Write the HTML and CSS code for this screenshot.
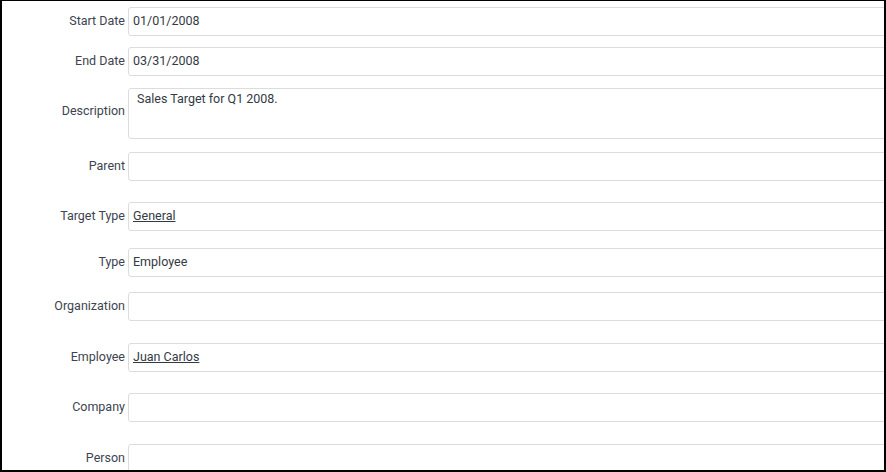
FILE: index.html
```html
<!DOCTYPE html>
<html>
<head>
<meta charset="utf-8">
<link rel="stylesheet" href="styles.css">
</head>
<body>
<div class="frame">
  <div class="form">
    <div class="row r-start">
      <label class="lbl">Start Date</label>
      <div class="field">01/01/2008</div>
    </div>
    <div class="row r-end">
      <label class="lbl">End Date</label>
      <div class="field">03/31/2008</div>
    </div>
    <div class="row r-desc">
      <label class="lbl">Description</label>
      <div class="field area">Sales Target for Q1 2008.</div>
    </div>
    <div class="row r-parent">
      <label class="lbl">Parent</label>
      <div class="field"></div>
    </div>
    <div class="row r-ttype">
      <label class="lbl">Target Type</label>
      <div class="field"><a class="link" href="#">General</a></div>
    </div>
    <div class="row r-type">
      <label class="lbl">Type</label>
      <div class="field">Employee</div>
    </div>
    <div class="row r-org">
      <label class="lbl">Organization</label>
      <div class="field"></div>
    </div>
    <div class="row r-emp">
      <label class="lbl">Employee</label>
      <div class="field"><a class="link" href="#">Juan Carlos</a></div>
    </div>
    <div class="row r-comp">
      <label class="lbl">Company</label>
      <div class="field"></div>
    </div>
    <div class="row r-person">
      <label class="lbl">Person</label>
      <div class="field"></div>
    </div>
  </div>
</div>
</body>
</html>
```

FILE: styles.css
```css
html, body {
  margin: 0;
  padding: 0;
  background: #fff;
}
.frame {
  box-sizing: border-box;
  width: 886px;
  height: 472px;
  border-style: solid;
  border-color: #000;
  border-width: 1px 2px 2px 2px;
  overflow: hidden;
  font-family: Roboto, "Liberation Sans", sans-serif;
  font-size: 12.5px;
}
.form {
  display: flex;
  flex-direction: column;
}
.row {
  display: flex;
  align-items: center;
}
.lbl {
  width: 126px;
  flex: none;
  text-align: right;
  color: #3d4450;
  padding-right: 3px;
  padding-bottom: 2px;
  box-sizing: border-box;
  font-size: 12.5px;
}
.row.r-desc .lbl {
  margin-top: -5px;
}
.field {
  box-sizing: border-box;
  flex: none;
  width: 800px;
  height: 29px;
  border: 1px solid #dcdcdc;
  border-radius: 3px;
  padding: 0 4px 2px;
  display: flex;
  align-items: center;
  color: #333a44;
  font-size: 12.5px;
}
.field.area {
  height: 51px;
  align-items: flex-start;
  padding: 2px 8px;
}
.link {
  color: #333a44;
  text-decoration: underline;
}
.r-start { margin-top: 6px; }
.r-end { margin-top: 11px; }
.r-desc { margin-top: 12px; }
.r-parent { margin-top: 13px; }
.r-ttype { margin-top: 21px; }
.r-type { margin-top: 17px; }
.r-org { margin-top: 15px; }
.r-emp { margin-top: 22px; }
.r-comp { margin-top: 21px; }
.r-person { margin-top: 22px; }
```
